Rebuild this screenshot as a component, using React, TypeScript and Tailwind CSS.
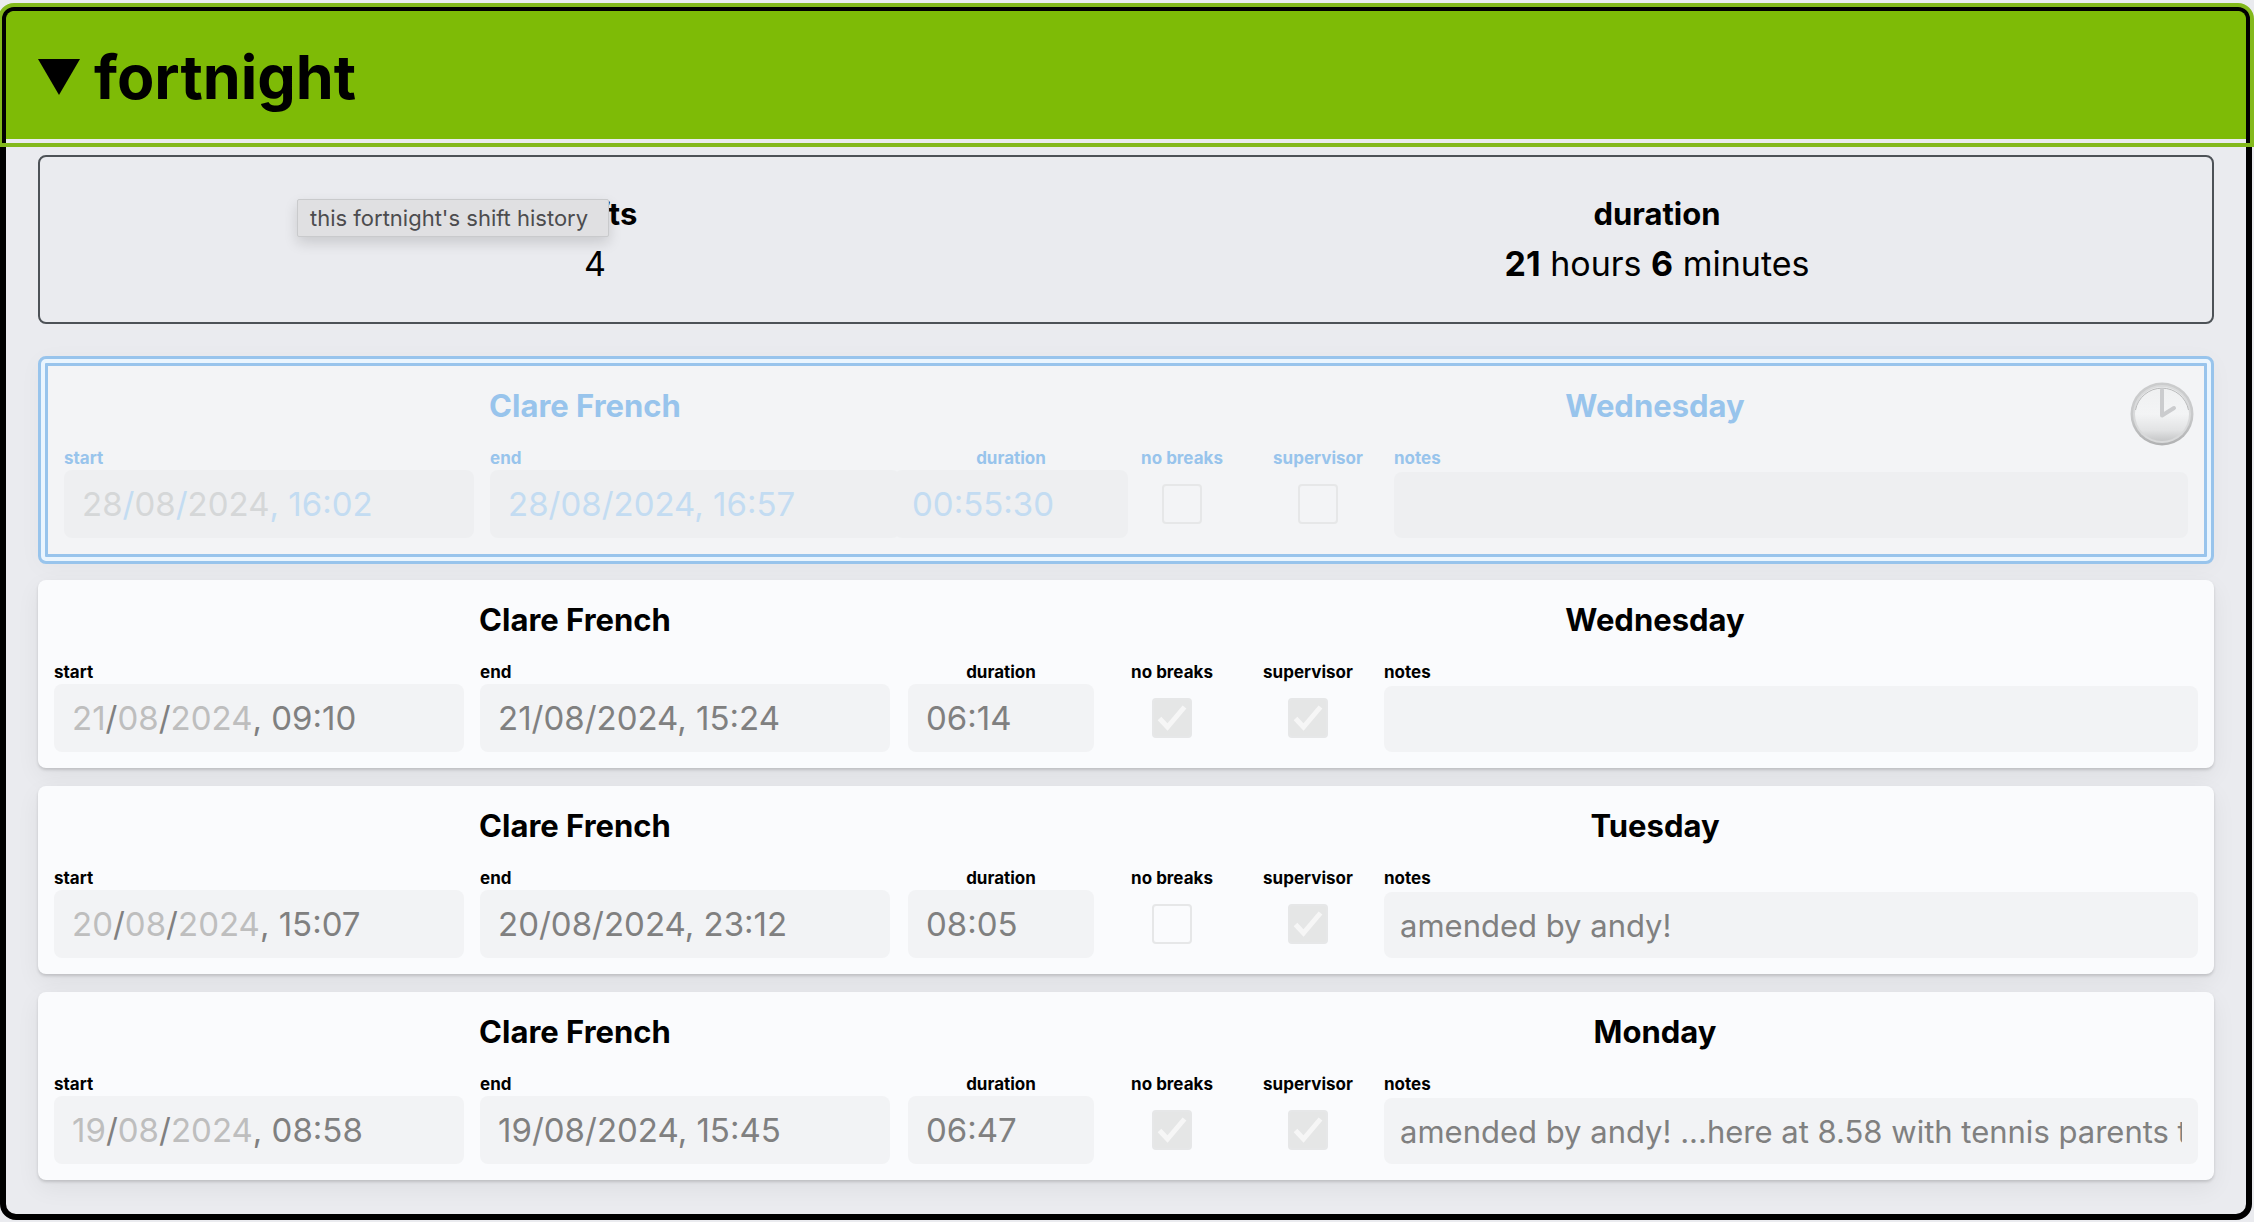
import React, { useId } from "react";

type Shift = {
  name: string;
  day: string;
  start: [string, string, string, string];
  end: string;
  duration: string;
  noBreaks: boolean;
  supervisor: boolean;
  notes: string;
  active?: boolean;
};

const shifts: Shift[] = [
  {
    name: "Clare French",
    day: "Wednesday",
    start: ["28", "08", "2024", "16:02"],
    end: "28/08/2024, 16:57",
    duration: "00:55:30",
    noBreaks: false,
    supervisor: false,
    notes: "",
    active: true,
  },
  {
    name: "Clare French",
    day: "Wednesday",
    start: ["21", "08", "2024", "09:10"],
    end: "21/08/2024, 15:24",
    duration: "06:14",
    noBreaks: true,
    supervisor: true,
    notes: "",
  },
  {
    name: "Clare French",
    day: "Tuesday",
    start: ["20", "08", "2024", "15:07"],
    end: "20/08/2024, 23:12",
    duration: "08:05",
    noBreaks: false,
    supervisor: true,
    notes: "amended by andy!",
  },
  {
    name: "Clare French",
    day: "Monday",
    start: ["19", "08", "2024", "08:58"],
    end: "19/08/2024, 15:45",
    duration: "06:47",
    noBreaks: true,
    supervisor: true,
    notes: "amended by andy! ...here at 8.58 with tennis parents till close",
  },
];

function Clock() {
  return (
    <svg viewBox="0 0 64 64" className="absolute top-4 right-2.5 size-16" aria-hidden="true">
      <defs>
        <linearGradient id="clock-rim" x1="0" y1="0" x2="0" y2="1">
          <stop offset="0" stopColor="#cbcccd" />
          <stop offset="0.5" stopColor="#c9cacb" />
          <stop offset="1" stopColor="#b0b1b2" />
        </linearGradient>
        <linearGradient id="clock-face" x1="0" y1="0" x2="0" y2="1">
          <stop offset="0" stopColor="#eff0f1" />
          <stop offset="0.5" stopColor="#f3f4f5" />
          <stop offset="0.8" stopColor="#e2e3e4" />
          <stop offset="1" stopColor="#c6c7c8" />
        </linearGradient>
      </defs>
      <circle cx="32" cy="32" r="31.5" fill="url(#clock-rim)" />
      <circle cx="32" cy="32" r="29" fill="#d9dadb" />
      <circle cx="32" cy="32" r="27" fill="url(#clock-face)" />
      <path d="M5.500 28a27 27 0 0 1 53 0" fill="none" stroke="#b9babb" strokeWidth="1" />
      <path d="M32 8v25.500L44 26" fill="none" stroke="#cbccce" strokeWidth="4" strokeLinecap="round" strokeLinejoin="round" />
    </svg>
  );
}

function Tick({ id, label, checked }: { id: string; label: string; checked: boolean }) {
  return (
    <div className="flex flex-col items-center">
      <label htmlFor={id} className="text-[17px] leading-6 font-bold whitespace-nowrap">
        {label}
      </label>
      <div className="mt-3.5 grid size-10">
        <input
          id={id}
          type="checkbox"
          defaultChecked={checked}
          disabled
          className="peer col-start-1 row-start-1 size-10 appearance-none rounded border-2 border-[#e6e7e8] bg-transparent checked:bg-[#e5e6e6]"
        />
        <svg
          viewBox="0 0 40 40"
          className="pointer-events-none invisible col-start-1 row-start-1 size-10 peer-checked:visible"
          aria-hidden="true"
        >
          <path d="M7.500 20.500 15.500 29 32.500 9" fill="none" stroke="#f6f6f6" strokeWidth="5" />
        </svg>
      </div>
    </div>
  );
}

function ShiftCard({ shift }: { shift: Shift }) {
  const id = useId();
  const a = shift.active;
  const field = a ? "bg-[#eeeff1] text-[#c3dcf2]" : "bg-[#f2f3f5] text-[#808080]";
  const muted = a ? "text-[#d5d7d8]" : "text-[#bebebe]";
  const label = "text-[17px] leading-6 font-bold whitespace-nowrap";
  const title = "col-span-3 mb-4 text-center text-[31px] leading-12 font-bold";
  const [day, month, year, time] = shift.start;
  const part = (name: string, value: string, tone: string, partId?: string) => (
    <input
      id={partId}
      aria-label={partId ? undefined : name}
      value={value}
      readOnly
      className={"field-sizing-content bg-transparent " + tone}
    />
  );

  return (
    <article
      className={
        "relative rounded-lg p-4 " +
        (a
          ? "mb-4 border-10 border-double border-[#98c4ec] text-[#98c4ec] shadow-[0_4px_24px_rgba(0,0,0,0.03)] [background:linear-gradient(#f3f4f6,#f3f4f6)_padding-box,#eaf5fe_border-box]"
          : "mb-[18px] bg-[#fafbfd] text-black shadow-[0_2px_3px_rgba(0,0,0,0.15),0_8px_24px_rgba(0,0,0,0.06)]")
      }
    >
      <div className="grid grid-cols-[410px_410px_190px_120px_120px_1fr] gap-x-4">
        <h3 className={title}>{shift.name}</h3>
        <h3 className={title}>{shift.day}</h3>

        <div>
          <label htmlFor={id + "start"} className={"block " + label}>
            start
          </label>
          <div className={"flex h-[68px] items-center rounded-lg px-[18px] pt-0.5 text-[33px] " + field}>
            {part("day", day, muted, id + "start")}
            <span>/</span>
            {part("month", month, muted)}
            <span>/</span>
            {part("year", year, muted)}
            <span className="whitespace-pre">, </span>
            {part("time", time, "")}
          </div>
        </div>

        <div>
          <label htmlFor={id + "end"} className={"block " + label}>
            end
          </label>
          <input
            id={id + "end"}
            value={shift.end}
            readOnly
            className={"block h-[68px] w-full rounded-lg px-[18px] text-[33px] " + field}
          />
        </div>

        <div className="flex flex-col items-center">
          <label htmlFor={id + "duration"} className={label}>
            duration
          </label>
          <input
            id={id + "duration"}
            value={shift.duration}
            readOnly
            className={"h-[68px] rounded-lg px-[18px] text-[33px] " + (a ? "w-[234px] " : "w-[186px] ") + field}
          />
        </div>

        <Tick id={id + "breaks"} label="no breaks" checked={shift.noBreaks} />
        <Tick id={id + "supervisor"} label="supervisor" checked={shift.supervisor} />

        <div className="min-w-0">
          <label htmlFor={id + "notes"} className={"block " + label}>
            notes
          </label>
          <input
            id={id + "notes"}
            value={shift.notes}
            readOnly
            className={"mt-0.5 block h-[66px] w-full rounded-lg px-4 text-[31px] " + field}
          />
        </div>
      </div>
      {a && <Clock />}
    </article>
  );
}

export default function App() {
  return (
    <main className="min-h-screen overflow-hidden bg-[#eaebef] pt-[5px] pr-0.5 pb-0.5 font-['Inter',sans-serif] text-black">
      <details open className="rounded-2xl border-6 border-black bg-[#eaebef]">
        <summary className="flex h-32 items-center gap-3.5 rounded-t-lg bg-[#7ebb06] px-8 pt-1 outline-4 outline-offset-4 outline-[#83b91c]">
          <svg viewBox="0 0 42 36" className="h-9 w-[42px]" aria-hidden="true">
            <path d="M0 0H42L21 36Z" fill="#000" />
          </svg>
          <h2 className="text-[61px] leading-none font-bold">fortnight</h2>
        </summary>

        <div className="px-8 py-4">
          <section className="relative mb-8 grid grid-cols-2 rounded-lg border-2 border-[#4d5257] px-6 pt-8 pb-[33px] text-center">
            <div>
              <h3 className="text-[31px] leading-[50px] font-bold">shifts</h3>
              <p className="text-[34px] leading-[50px]">4</p>
            </div>
            <div>
              <h3 className="text-[31px] leading-[50px] font-bold">duration</h3>
              <p className="text-[34px] leading-[50px]">
                <b>21</b> hours <b>6</b> minutes
              </p>
            </div>
            <div
              role="tooltip"
              className="absolute top-[42px] left-[257px] rounded-xs border border-[#c9cacc] bg-[#e0e0e2] pr-5 pl-3 text-[22px] leading-9 whitespace-nowrap text-[#4c4c4e] shadow-[0_6px_14px_rgba(0,0,0,0.14)]"
            >
              this fortnight's shift history
            </div>
          </section>

          {shifts.map((shift, i) => (
            <ShiftCard key={i} shift={shift} />
          ))}
        </div>
      </details>
    </main>
  );
}
